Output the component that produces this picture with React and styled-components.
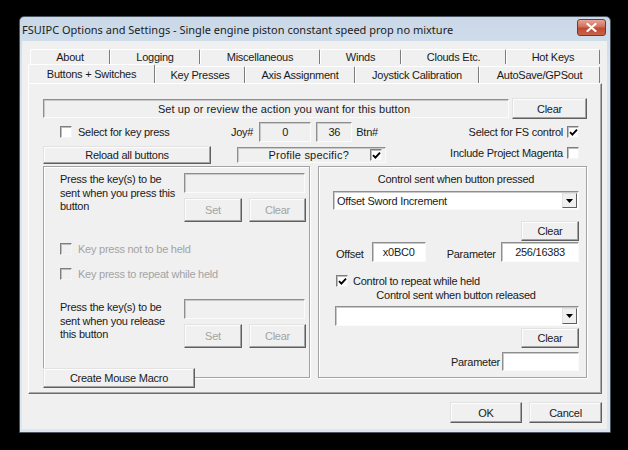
import React from 'react';
import styled, { createGlobalStyle } from 'styled-components';

const GlobalStyle = createGlobalStyle`
  html, body { margin: 0; padding: 0; background: #000; }
  body {
    width: 628px;
    height: 450px;
    overflow: hidden;
    font-family: 'Liberation Sans', Arial, sans-serif;
    font-size: 11px;
    letter-spacing: -0.25px;
    color: #1a1a1a;
  }
`;

const Desktop = styled.div`
  width: 628px;
  height: 450px;
  box-sizing: border-box;
  padding: 16px 0 0 19px;
  background: #000;
`;

const Window = styled.div`
  width: 592px;
  height: 417px;
  box-sizing: border-box;
  display: flex;
  flex-direction: column;
  border: 1px solid #4a5560;
  border-radius: 5px 5px 0 0;
  padding: 0 3px 3px 2px;
  background: linear-gradient(to bottom, #c9d7e7 0%, #d6e2ee 12%, #dbe6f1 100%);
`;

const TitleBar = styled.div`
  height: 24px;
  flex-shrink: 0;
  display: flex;
  align-items: flex-start;
`;

const TitleText = styled.div`
  flex: 1;
  padding-top: 5px;
  font-family: 'Noto Sans', 'Open Sans', sans-serif;
  font-size: 11px;
  letter-spacing: 0;
  color: #1c1c1c;
  white-space: nowrap;
`;

const CloseBtn = styled.div`
  width: 29px;
  height: 17px;
  margin: 2px 1px 0 0;
  box-sizing: border-box;
  border: 1px solid #7d3526;
  border-radius: 3px;
  background: linear-gradient(to bottom, #e7a596 0%, #d0705c 45%, #bf4a32 55%, #c9624a 100%);
  display: flex;
  align-items: center;
  justify-content: center;
`;

const Client = styled.div`
  flex: 1;
  background: #f0f0f0;
  padding: 8px 5px 0 6px;
  display: flex;
  flex-direction: column;
`;

const TabRow = styled.div`
  display: flex;
  align-items: flex-end;
  height: ${p => p.$h}px;
  padding-left: ${p => p.$indent}px;
`;

const Tab = styled.div`
  width: ${p => p.$w}px;
  height: ${p => p.$h}px;
  box-sizing: border-box;
  border-top: 1px solid #fff;
  border-left: 1px solid #fff;
  border-right: 1px solid #7c7c7c;
  border-radius: 2px 2px 0 0;
  background: #f0f0f0;
  display: flex;
  align-items: center;
  justify-content: center;
  white-space: nowrap;
  margin-bottom: ${p => (p.$selected ? -1 : 0)}px;
  padding-bottom: ${p => (p.$selected ? 2 : 0)}px;
`;

const Panel = styled.div`
  height: 311px;
  box-sizing: border-box;
  border: 1px solid;
  border-color: #fff #6e6e6e #6e6e6e #fff;
  box-shadow: inset -1px -1px 0 #a9a9a9;
  padding: 14px 14px 0 14px;
  display: flex;
  flex-direction: column;
`;

const Row = styled.div`
  display: flex;
  align-items: center;
  height: ${p => p.$h}px;
  margin-top: ${p => p.$mt || 0}px;
  gap: ${p => p.$gap || 0}px;
`;

const Button = styled.div`
  width: ${p => p.$w}px;
  height: ${p => p.$h || 21}px;
  box-sizing: border-box;
  flex-shrink: 0;
  border: 1px solid;
  border-color: #e2e2e2 #5f5f5f #5f5f5f #e2e2e2;
  box-shadow: inset -1px -1px 0 #a3a3a3, inset 1px 1px 0 #fdfdfd;
  background: #f0f0f0;
  color: ${p => (p.$disabled ? '#a3a3a3' : '#1a1a1a')};
  display: flex;
  align-items: center;
  justify-content: center;
  white-space: nowrap;
  margin-top: ${p => p.$mt || 0}px;
  align-self: ${p => p.$align || 'auto'};
`;

const Sunken = styled.div`
  width: ${p => p.$w}px;
  height: ${p => p.$h || 20}px;
  box-sizing: border-box;
  flex-shrink: 0;
  border: 1px solid;
  border-color: #8e8e8e #fbfbfb #fbfbfb #8e8e8e;
  box-shadow: inset 1px 1px 0 #c9c9c9;
  background: ${p => (p.$white ? '#fff' : '#f0f0f0')};
  display: flex;
  align-items: center;
  justify-content: ${p => p.$justify || 'center'};
  padding: 0 3px;
  white-space: nowrap;
`;

const StatusText = styled.span`
  letter-spacing: 0.1px;
  padding-left: 16px;
`;

const Label = styled.span`
  white-space: nowrap;
  color: ${p => (p.$disabled ? '#a3a3a3' : 'inherit')};
`;

const Box = styled.span`
  width: 12px;
  height: 12px;
  box-sizing: border-box;
  flex-shrink: 0;
  border: 1px solid;
  border-color: #7e7e7e #f4f4f4 #f4f4f4 #7e7e7e;
  box-shadow: inset 1px 1px 0 #bdbdbd;
  background: ${p => (p.$disabled ? '#f0f0f0' : '#fff')};
  display: flex;
  align-items: center;
  justify-content: center;
`;

const CheckLine = styled.div`
  display: flex;
  align-items: center;
  gap: ${p => p.$gap || 6}px;
  height: 14px;
  margin-top: ${p => p.$mt || 0}px;
  margin-left: ${p => (p.$right ? 'auto' : 0)};
  padding-right: ${p => p.$pr || 0}px;
`;

const Columns = styled.div`
  display: flex;
  gap: 8px;
  margin-top: 2px;
`;

const LeftColumn = styled.div`
  display: flex;
  flex-direction: column;
`;

const Group = styled.div`
  width: ${p => p.$w}px;
  height: 212px;
  box-sizing: border-box;
  border: 1px solid #a3a3a3;
  box-shadow: 1px 1px 0 #fff, inset 1px 1px 0 #fff;
  padding: 6px ${p => p.$pr}px 0 ${p => p.$pl}px;
  display: flex;
  flex-direction: column;
`;

const KeyBlock = styled.div`
  display: grid;
  grid-template-columns: 124px 122px;
  margin-top: ${p => p.$mt || 0}px;
`;

const KeyText = styled.div`
  line-height: 13.5px;
  padding-top: ${p => p.$pt || 0}px;
  white-space: nowrap;
`;

const KeyControls = styled.div`
  display: flex;
  flex-direction: column;
  gap: 5px;
`;

const ButtonPair = styled.div`
  display: flex;
  gap: 7px;
`;

const Caption = styled.div`
  text-align: center;
  line-height: 13px;
  margin-top: ${p => p.$mt || 0}px;
`;

const Combo = styled.div`
  width: ${p => p.$w}px;
  height: ${p => p.$h}px;
  box-sizing: border-box;
  margin-top: ${p => p.$mt || 0}px;
  margin-left: ${p => p.$ml || 0}px;
  border: 1px solid;
  border-color: #8e8e8e #fbfbfb #fbfbfb #8e8e8e;
  box-shadow: inset 1px 1px 0 #c9c9c9;
  background: #fff;
  display: flex;
  align-items: center;
  padding-left: 3px;
`;

const ComboValue = styled.span`
  flex: 1;
  white-space: nowrap;
`;

const DropButton = styled.span`
  width: 15px;
  align-self: stretch;
  margin: 1px 1px 1px 0;
  box-sizing: border-box;
  border: 1px solid;
  border-color: #e2e2e2 #5f5f5f #5f5f5f #e2e2e2;
  background: #f0f0f0;
  display: flex;
  align-items: center;
  justify-content: center;
`;

const Footer = styled.div`
  display: flex;
  justify-content: flex-end;
  gap: 7px;
  margin-top: 8px;
`;

const Check = ({ checked, disabled }) => (
  <Box $disabled={disabled}>
    {checked && (
      <svg width="9" height="9" viewBox="0 0 9 9">
        <path d="M1 4.2 L3.4 6.6 L8 1.6" stroke="#000" strokeWidth="1.9" fill="none" />
      </svg>
    )}
  </Box>
);

const DropArrow = () => (
  <svg width="7" height="4" viewBox="0 0 7 4">
    <path d="M0 0 H7 L3.5 4 Z" fill="#000" />
  </svg>
);

const backTabs = [
  { label: 'About', w: 80 },
  { label: 'Logging', w: 90 },
  { label: 'Miscellaneous', w: 120 },
  { label: 'Winds', w: 81 },
  { label: 'Clouds Etc.', w: 105 },
  { label: 'Hot Keys', w: 94 },
];

const frontTabs = [
  { label: 'Buttons + Switches', w: 127, selected: true },
  { label: 'Key Presses', w: 90 },
  { label: 'Axis Assignment', w: 110 },
  { label: 'Joystick Calibration', w: 124 },
  { label: 'AutoSave/GPSout', w: 121 },
];

export default function App() {
  return (
    <>
      <GlobalStyle />
      <Desktop>
        <Window>
          <TitleBar>
            <TitleText>FSUIPC Options and Settings - Single engine piston constant speed prop no mixture</TitleText>
            <CloseBtn>
              <svg width="11" height="9" viewBox="0 0 11 9">
                <path d="M1.5 1 L9.5 8 M9.5 1 L1.5 8" stroke="#fff" strokeWidth="2.2" strokeLinecap="round" />
              </svg>
            </CloseBtn>
          </TitleBar>

          <Client>
            <TabRow $h={15} $indent={2}>
              {backTabs.map(t => (
                <Tab key={t.label} $w={t.w} $h={15}>{t.label}</Tab>
              ))}
            </TabRow>
            <TabRow $h={19} $indent={0}>
              {frontTabs.map(t => (
                <Tab key={t.label} $w={t.w} $h={t.selected ? 20 : 17} $selected={t.selected}>{t.label}</Tab>
              ))}
            </TabRow>

            <Panel>
              <Row $h={21}>
                <Sunken $w={466} $h={19}>
                  <StatusText>Set up or review the action you want for this button</StatusText>
                </Sunken>
                <Button $w={75} $h={21} style={{ marginLeft: 'auto' }}>Clear</Button>
              </Row>

              <Row $h={20} $mt={3}>
                <CheckLine style={{ width: 171, paddingLeft: 17 }}>
                  <Check />
                  <Label>Select for key press</Label>
                </CheckLine>
                <Label>Joy#</Label>
                <Sunken $w={52} style={{ marginLeft: 6 }}>0</Sunken>
                <Sunken $w={36} style={{ marginLeft: 5 }}>36</Sunken>
                <Label style={{ marginLeft: 4 }}>Btn#</Label>
                <CheckLine $right $pr={8} $gap={4}>
                  <Label>Select for FS control</Label>
                  <Check checked />
                </CheckLine>
              </Row>

              <Row $h={18} $mt={4}>
                <Button $w={168} $h={18}>Reload all buttons</Button>
                <Sunken $w={149} $h={16} style={{ marginLeft: 26 }} $justify="flex-end">
                  <Label style={{ marginRight: 21, letterSpacing: '0.2px' }}>Profile specific?</Label>
                  <Check checked />
                </Sunken>
                <CheckLine $right $pr={8} $gap={4} style={{ alignSelf: 'flex-start' }}>
                  <Label>Include Project Magenta</Label>
                  <Check />
                </CheckLine>
              </Row>

              <Columns>
                <LeftColumn>
                  <Group $w={267} $pl={16} $pr={0}>
                    <KeyBlock>
                      <KeyText>Press the key(s) to be<br />sent when you press this<br />button</KeyText>
                      <KeyControls>
                        <Sunken $w={121} />
                        <ButtonPair>
                          <Button $w={58} $h={24} $disabled>Set</Button>
                          <Button $w={57} $h={24} $disabled>Clear</Button>
                        </ButtonPair>
                      </KeyControls>
                    </KeyBlock>

                    <CheckLine $mt={20}>
                      <Check disabled />
                      <Label $disabled>Key press not to be held</Label>
                    </CheckLine>
                    <CheckLine $mt={11}>
                      <Check disabled />
                      <Label $disabled>Key press to repeat while held</Label>
                    </CheckLine>

                    <KeyBlock $mt={18}>
                      <KeyText $pt={2}>Press the key(s) to be<br />sent when you release<br />this button</KeyText>
                      <KeyControls>
                        <Sunken $w={121} />
                        <ButtonPair>
                          <Button $w={58} $h={24} $disabled>Set</Button>
                          <Button $w={57} $h={24} $disabled>Clear</Button>
                        </ButtonPair>
                      </KeyControls>
                    </KeyBlock>
                  </Group>
                  <Button $w={152} $h={20} $mt={-10}>Create Mouse Macro</Button>
                </LeftColumn>

                <Group $w={269} $pl={14} $pr={7}>
                  <Caption>Control sent when button pressed</Caption>
                  <Combo $w={246} $h={19} $mt={5}>
                    <ComboValue>Offset Sword Increment</ComboValue>
                    <DropButton><DropArrow /></DropButton>
                  </Combo>
                  <Button $w={58} $h={20} $mt={11} $align="flex-end">Clear</Button>
                  <Row $h={20} $mt={1}>
                    <Label style={{ marginLeft: 3, marginTop: 3 }}>Offset</Label>
                    <Sunken $w={54} $white style={{ marginLeft: 8 }}>x0BC0</Sunken>
                    <Label style={{ marginLeft: 21, marginTop: 3 }}>Parameter</Label>
                    <Sunken $w={78} $white style={{ marginLeft: 'auto' }}>256/16383</Sunken>
                  </Row>
                  <CheckLine $mt={12} $gap={5} style={{ paddingLeft: 3 }}>
                    <Check checked />
                    <Label>Control to repeat while held</Label>
                  </CheckLine>
                  <Caption $mt={1}>Control sent when button released</Caption>
                  <Combo $w={244} $h={20} $mt={4} $ml={2}>
                    <ComboValue />
                    <DropButton><DropArrow /></DropButton>
                  </Combo>
                  <Button $w={58} $h={20} $mt={2} $align="flex-end">Clear</Button>
                  <Row $h={19} $mt={4}>
                    <Label style={{ marginLeft: 'auto', marginRight: 2 }}>Parameter</Label>
                    <Sunken $w={77} $h={19} $white />
                  </Row>
                </Group>
              </Columns>
            </Panel>

            <Footer>
              <Button $w={72} $h={21}>OK</Button>
              <Button $w={73} $h={21}>Cancel</Button>
            </Footer>
          </Client>
        </Window>
      </Desktop>
    </>
  );
}
